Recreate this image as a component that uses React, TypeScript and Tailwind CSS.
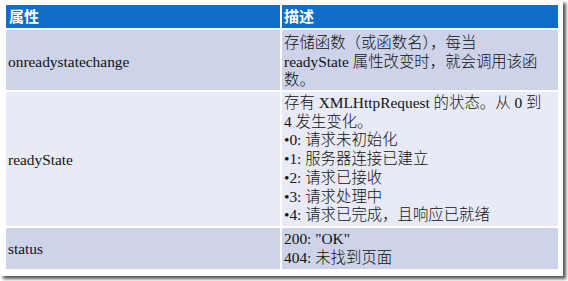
const rows = [
  {
    name: "onreadystatechange",
    desc: ["存储函数（或函数名），每当", "readyState 属性改变时，就会调用该函", "数。"],
    h: "h-[60px] pt-[4px]",
    bg: "bg-[#cdd4ea]",
  },
  {
    name: "readyState",
    desc: [
      "存有 XMLHttpRequest 的状态。从 0 到",
      "4 发生变化。",
      "•0: 请求未初始化",
      "•1: 服务器连接已建立",
      "•2: 请求已接收",
      "•3: 请求处理中",
      "•4: 请求已完成，且响应已就绪",
    ],
    h: "h-[134px] pt-[1px]",
    bg: "bg-[#e8ebf5]",
  },
  {
    name: "status",
    desc: ['200: "OK"', "404: 未找到页面"],
    h: "h-[41px] pt-[1px]",
    bg: "bg-[#cdd4ea]",
  },
];

export default function App() {
  return (
    <div className="w-[568px] h-[281px] bg-white">
      <div className="w-[563px] h-[276px] bg-white pt-[5px] pl-[6px] shadow-[3px_3px_3px_rgba(0,0,0,0.65)]">
        <div className="grid grid-cols-[274px_276px] gap-[2px] text-[15.4px] text-[#111] font-['Liberation_Serif','Times_New_Roman','Noto_Sans_CJK_SC',serif]">
          {/* header */}
          <div className="h-[23px] bg-[#0f6fc6] text-white font-bold text-[15px] pl-[3px] flex items-center font-['Noto_Sans_CJK_SC',sans-serif]">
            属性
          </div>
          <div className="h-[23px] bg-[#0f6fc6] text-white font-bold text-[15px] pl-[2px] flex items-center font-['Noto_Sans_CJK_SC',sans-serif]">
            描述
          </div>

          {rows.map((r) => (
            <>
              <div key={r.name} className={`${r.h} ${r.bg} flex items-center pl-[2px]`}>
                {r.name}
              </div>
              <div
                key={r.name + "-d"}
                className={`${r.h} ${r.bg} flex flex-col justify-center pl-[2px] leading-[18.7px] font-light`}
              >
                {r.desc.map((line) => (
                  <div key={line} className="whitespace-nowrap">
                    {line}
                  </div>
                ))}
              </div>
            </>
          ))}
        </div>
      </div>
    </div>
  );
}
